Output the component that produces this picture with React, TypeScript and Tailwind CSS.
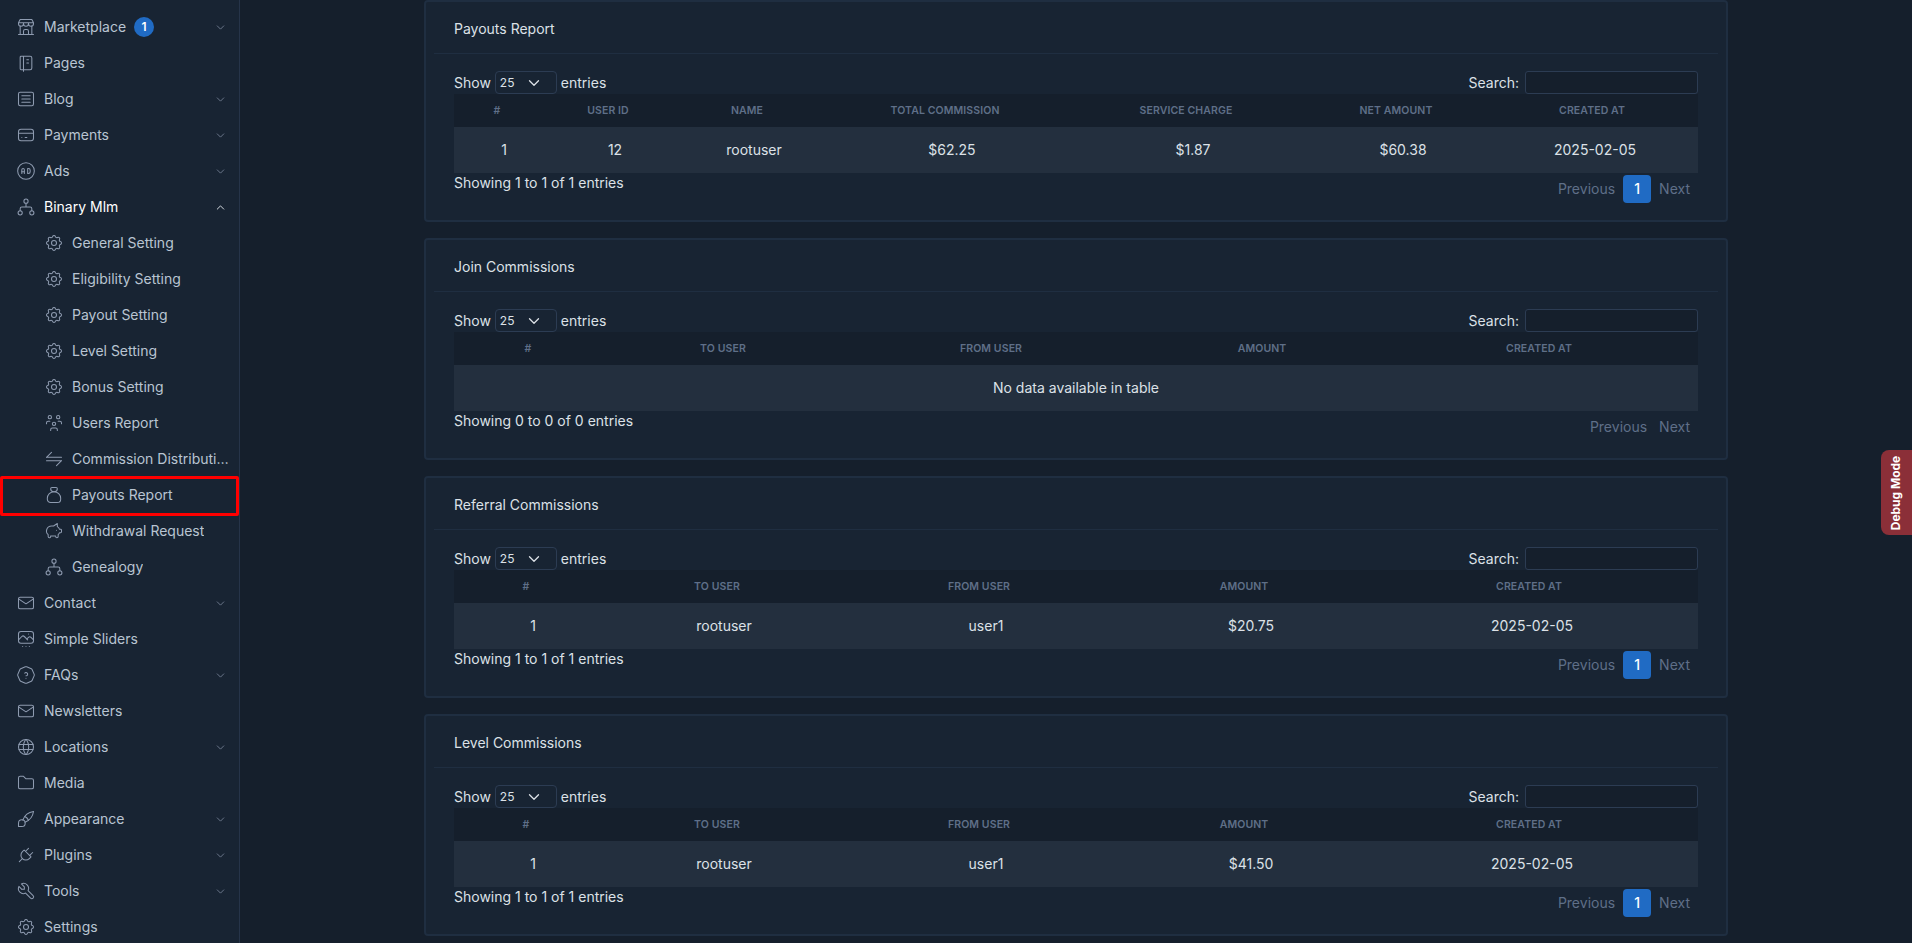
import React from "react";
import {
  TbBuildingStore,
  TbNotebook,
  TbArticle,
  TbCreditCard,
  TbAdCircle,
  TbSettings,
  TbUsersGroup,
  TbMoneybag,
  TbPig,
  TbMail,
  TbSlideshow,
  TbHelpOctagon,
  TbWorld,
  TbFolder,
  TbBrush,
  TbPlug,
  TbTool,
  TbChevronDown,
  TbChevronUp,
} from "react-icons/tb";

type IconProps = { size?: number; strokeWidth?: number; className?: string };

// three nodes on a squared branch, not quite the same as TbHierarchy
function TreeIcon({ size = 20, strokeWidth = 1.25, className }: IconProps) {
  return (
    <svg width={size} height={size} viewBox="0 0 24 24" fill="none" stroke="currentColor" strokeWidth={strokeWidth} strokeLinecap="round" strokeLinejoin="round" className={className}>
      <circle cx="12" cy="5" r="2.5" />
      <circle cx="5" cy="19" r="2.5" />
      <circle cx="19" cy="19" r="2.5" />
      <path d="M12 7.5v4.5M5 16.5v-2.5a2 2 0 0 1 2 -2h10a2 2 0 0 1 2 2v2.5" />
    </svg>
  );
}

function HalfArrowsIcon({ size = 20, strokeWidth = 1.25, className }: IconProps) {
  return (
    <svg width={size} height={size} viewBox="0 0 24 24" fill="none" stroke="currentColor" strokeWidth={strokeWidth} strokeLinecap="round" strokeLinejoin="round" className={className}>
      <path d="M3 10h18M3 10l6 -6M21 14h-18M21 14l-6 6" />
    </svg>
  );
}

type NavItem = {
  label: string;
  icon: React.ComponentType<IconProps>;
  sub?: boolean;
  chevron?: "down" | "up";
  badge?: string;
  active?: boolean;
  boxed?: boolean;
};

const nav: NavItem[] = [
  { label: "Marketplace", icon: TbBuildingStore, chevron: "down", badge: "1" },
  { label: "Pages", icon: TbNotebook },
  { label: "Blog", icon: TbArticle, chevron: "down" },
  { label: "Payments", icon: TbCreditCard, chevron: "down" },
  { label: "Ads", icon: TbAdCircle, chevron: "down" },
  { label: "Binary Mlm", icon: TreeIcon, chevron: "up", active: true },
  { label: "General Setting", icon: TbSettings, sub: true },
  { label: "Eligibility Setting", icon: TbSettings, sub: true },
  { label: "Payout Setting", icon: TbSettings, sub: true },
  { label: "Level Setting", icon: TbSettings, sub: true },
  { label: "Bonus Setting", icon: TbSettings, sub: true },
  { label: "Users Report", icon: TbUsersGroup, sub: true },
  { label: "Commission Distribution", icon: HalfArrowsIcon, sub: true },
  { label: "Payouts Report", icon: TbMoneybag, sub: true, boxed: true },
  { label: "Withdrawal Request", icon: TbPig, sub: true },
  { label: "Genealogy", icon: TreeIcon, sub: true },
  { label: "Contact", icon: TbMail, chevron: "down" },
  { label: "Simple Sliders", icon: TbSlideshow },
  { label: "FAQs", icon: TbHelpOctagon, chevron: "down" },
  { label: "Newsletters", icon: TbMail },
  { label: "Locations", icon: TbWorld, chevron: "down" },
  { label: "Media", icon: TbFolder },
  { label: "Appearance", icon: TbBrush, chevron: "down" },
  { label: "Plugins", icon: TbPlug, chevron: "down" },
  { label: "Tools", icon: TbTool, chevron: "down" },
  { label: "Settings", icon: TbSettings },
];

function NavRow({ item }: { item: NavItem }) {
  const Icon = item.icon;
  return (
    <div className={`relative flex h-9 shrink-0 items-center pr-[8px] ${item.sub ? "pl-[44px]" : "pl-[16px]"}`}>
      <Icon size={20} strokeWidth={1.25} className="mr-[8px] shrink-0 text-[#8e9bb0]" />
      <span className={`truncate ${item.active ? "text-white" : "text-[#b9c4d2]"}`}>{item.label}</span>
      {item.badge && (
        <span className="ml-[8px] flex h-5 w-5 items-center justify-center rounded-full bg-[#206bc4] text-xs font-semibold text-white">
          {item.badge}
        </span>
      )}
      {item.chevron === "down" && <TbChevronDown size={13} strokeWidth={1.5} className="ml-auto mr-[4px] shrink-0 text-[#7b889c]" />}
      {item.chevron === "up" && <TbChevronUp size={13} strokeWidth={1.75} className="ml-auto mr-[4px] shrink-0 text-[#dce1e7]" />}
      {item.boxed && <div className="absolute inset-x-0 top-[-1px] bottom-[-3px] rounded-[2px] border-[3px] border-[#ff0000]" />}
    </div>
  );
}

type Column = { title: string; width: number };

function ReportCard({
  title,
  columns,
  rows,
  pager,
  info,
}: {
  title: string;
  columns: Column[];
  rows: string[][];
  pager: boolean;
  info: string;
}) {
  return (
    <section className="h-[222px] shrink-0 rounded-[4px] border-2 border-[#1f2e41] bg-[#182433] px-[8px]">
      <div className="flex h-[52px] items-center border-b border-[#1f2e41] px-[20px] pt-[2px] text-[#dce1e7]">{title}</div>
      <div className="px-[20px]">
        <div className="flex h-[40px] items-end justify-between text-[#dce1e7]">
          <div className="flex h-[23px] items-center">
            <span>Show</span>
            <div className="mx-[4px] flex h-[23px] w-[62px] items-center justify-between rounded-[4px] border border-[#2c3c53] pl-[4px] pr-[13px] text-xs">
              25
              <TbChevronDown size={18} strokeWidth={1.75} />
            </div>
            <span>entries</span>
          </div>
          <div className="flex h-[23px] items-center">
            <span className="mr-[6px]">Search:</span>
            <div className="h-[23px] w-[173px] rounded-[3px] border border-[#2c3c53] bg-[#151f2c]" />
          </div>
        </div>
        <table className="w-full table-fixed border-collapse">
          <colgroup>
            {columns.map((c) => (
              <col key={c.title} style={{ width: c.width }} />
            ))}
          </colgroup>
          <thead>
            <tr className="h-[33px] bg-[#151f2c]">
              {columns.map((c, i) => (
                <th
                  key={c.title}
                  className={`text-center text-[10.5px] font-semibold tracking-[0.01em] text-[#5f6f88] uppercase ${i === columns.length - 1 ? "pr-[6px]" : "pr-[14px]"}`}
                >
                  {c.title}
                </th>
              ))}
            </tr>
          </thead>
          <tbody>
            {rows.length > 0 ? (
              rows.map((r, i) => (
                <tr key={i} className="h-[46px] bg-[#232f3e] text-[#dce1e7]">
                  {r.map((v, j) => (
                    <td key={j} className="text-center">
                      {v}
                    </td>
                  ))}
                </tr>
              ))
            ) : (
              <tr className="h-[46px] bg-[#232f3e] text-[#dce1e7]">
                <td colSpan={columns.length} className="text-center">
                  No data available in table
                </td>
              </tr>
            )}
          </tbody>
        </table>
        <div className="flex items-start justify-between">
          <span className="-mt-[1px] leading-[21px] text-[#dce1e7]">{info}</span>
          <div className="mt-[2px] flex h-[28px] items-center text-[#5f6f88]">
            <span className={`pl-[8px] ${pager ? "pr-[8px]" : "pr-[4px]"}`}>Previous</span>
            {pager && (
              <span className="flex h-[28px] w-[28px] items-center justify-center rounded-[4px] bg-[#206bc4] font-medium text-white">
                1
              </span>
            )}
            <span className="px-[8px]">Next</span>
          </div>
        </div>
      </div>
    </section>
  );
}

const commissionCols: Column[] = [
  { title: "#", width: 158 },
  { title: "To User", width: 224 },
  { title: "From User", width: 300 },
  { title: "Amount", width: 230 },
  { title: "Created At", width: 332 },
];

export default function App() {
  return (
    <div className="flex h-[943px] overflow-hidden bg-[#151f2c] font-['Inter',sans-serif] text-sm">
      <aside className="flex h-full w-[240px] shrink-0 flex-col overflow-hidden border-r border-[#263449] bg-[#182433] pt-[9px]">
        {nav.map((item) => (
          <NavRow key={item.label} item={item} />
        ))}
      </aside>
      <main className="flex min-w-0 flex-1 flex-col gap-[16px] px-[184px]">
        <ReportCard
          title="Payouts Report"
          columns={[
            { title: "#", width: 100 },
            { title: "User ID", width: 122 },
            { title: "Name", width: 156 },
            { title: "Total Commission", width: 240 },
            { title: "Service Charge", width: 242 },
            { title: "Net Amount", width: 178 },
            { title: "Created At", width: 206 },
          ]}
          rows={[["1", "12", "rootuser", "$62.25", "$1.87", "$60.38", "2025-02-05"]]}
          pager
          info="Showing 1 to 1 of 1 entries"
        />
        <ReportCard
          title="Join Commissions"
          columns={[
            { title: "#", width: 162 },
            { title: "To User", width: 228 },
            { title: "From User", width: 308 },
            { title: "Amount", width: 234 },
            { title: "Created At", width: 312 },
          ]}
          rows={[]}
          pager={false}
          info="Showing 0 to 0 of 0 entries"
        />
        <ReportCard
          title="Referral Commissions"
          columns={commissionCols}
          rows={[["1", "rootuser", "user1", "$20.75", "2025-02-05"]]}
          pager
          info="Showing 1 to 1 of 1 entries"
        />
        <ReportCard
          title="Level Commissions"
          columns={commissionCols}
          rows={[["1", "rootuser", "user1", "$41.50", "2025-02-05"]]}
          pager
          info="Showing 1 to 1 of 1 entries"
        />
      </main>
      <div className="fixed right-0 top-[450px] flex h-[85px] w-[31px] items-center justify-center rounded-l-[8px] bg-[#8b2f38]">
        <span className="rotate-[-90deg] whitespace-nowrap text-xs font-bold text-white">Debug Mode</span>
      </div>
    </div>
  );
}
